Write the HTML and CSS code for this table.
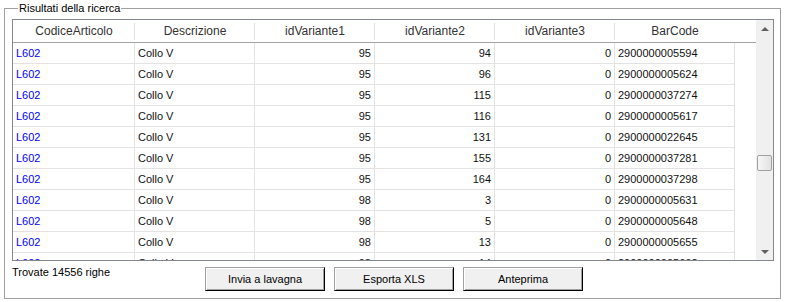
FILE: index.html
```html
<!DOCTYPE html>
<html lang="it">
<head>
    <meta charset="UTF-8">
    <title>Risultati della ricerca</title>
    <link rel="stylesheet" href="styles.css">
</head>
<body>
    <fieldset class="results">
        <legend>Risultati della ricerca</legend>

        <div class="grid">
            <div class="grid-body">
                <table>
                    <thead>
                        <tr>
                            <th class="c1 sep">CodiceArticolo</th>
                            <th class="sep">Descrizione</th>
                            <th class="sep">idVariante1</th>
                            <th class="sep">idVariante2</th>
                            <th class="sep">idVariante3</th>
                            <th>BarCode</th>
                            <th class="fill"></th>
                        </tr>
                    </thead>
                    <tbody>
                        <tr><td class="code">L602</td><td>Collo V</td><td class="num">95</td><td class="num">94</td><td class="num">0</td><td>2900000005594</td><td class="fill"></td></tr>
                        <tr><td class="code">L602</td><td>Collo V</td><td class="num">95</td><td class="num">96</td><td class="num">0</td><td>2900000005624</td><td class="fill"></td></tr>
                        <tr><td class="code">L602</td><td>Collo V</td><td class="num">95</td><td class="num">115</td><td class="num">0</td><td>2900000037274</td><td class="fill"></td></tr>
                        <tr><td class="code">L602</td><td>Collo V</td><td class="num">95</td><td class="num">116</td><td class="num">0</td><td>2900000005617</td><td class="fill"></td></tr>
                        <tr><td class="code">L602</td><td>Collo V</td><td class="num">95</td><td class="num">131</td><td class="num">0</td><td>2900000022645</td><td class="fill"></td></tr>
                        <tr><td class="code">L602</td><td>Collo V</td><td class="num">95</td><td class="num">155</td><td class="num">0</td><td>2900000037281</td><td class="fill"></td></tr>
                        <tr><td class="code">L602</td><td>Collo V</td><td class="num">95</td><td class="num">164</td><td class="num">0</td><td>2900000037298</td><td class="fill"></td></tr>
                        <tr><td class="code">L602</td><td>Collo V</td><td class="num">98</td><td class="num">3</td><td class="num">0</td><td>2900000005631</td><td class="fill"></td></tr>
                        <tr><td class="code">L602</td><td>Collo V</td><td class="num">98</td><td class="num">5</td><td class="num">0</td><td>2900000005648</td><td class="fill"></td></tr>
                        <tr><td class="code">L602</td><td>Collo V</td><td class="num">98</td><td class="num">13</td><td class="num">0</td><td>2900000005655</td><td class="fill"></td></tr>
                        <tr><td class="code">L602</td><td>Collo V</td><td class="num">98</td><td class="num">14</td><td class="num">0</td><td>2900000005662</td><td class="fill"></td></tr>
                    </tbody>
                </table>
            </div>

            <div class="scrollbar">
                <div class="sb-btn"><span class="arrow up"></span></div>
                <div class="sb-track"><div class="sb-thumb"></div></div>
                <div class="sb-btn"><span class="arrow down"></span></div>
            </div>
        </div>

        <div class="footer">
            <span class="count">Trovate 14556 righe</span>
            <button>Invia a lavagna</button>
            <button>Esporta XLS</button>
            <button>Anteprima</button>
        </div>
    </fieldset>
</body>
</html>
```

FILE: styles.css
```css
body {
    margin: 0;
    background-color: #ffffff;
    color: #000000;
    font-family: "Liberation Sans", Arial, sans-serif;
    font-size: 11px;
}

.results {
    margin: 2px 8px 3px 4px;
    padding: 4px 6px 7px 7px;
    border: 1px solid #a0a0a0;
}

.results legend {
    margin-left: 6px;
    padding: 0 1px;
    line-height: 13px;
}

/* data grid */
.grid {
    display: flex;
    height: 240px;
    border: 1px solid #828790;
    overflow: hidden;
}

.grid-body {
    flex: 1;
    overflow: hidden;
}

table {
    width: 743px;
    table-layout: fixed;
    border-collapse: separate;
    border-spacing: 0;
}

th, td {
    box-sizing: border-box;
    width: 120px;
    padding: 0 3px;
    white-space: nowrap;
    overflow: hidden;
}

th {
    position: relative;
    height: 23px;
    font-size: 12px;
    font-weight: normal;
    color: #333333;
    text-align: center;
    border-bottom: 1px solid #a5a5a5;
}

th.sep::after {
    content: "";
    position: absolute;
    top: 3px;
    bottom: 2px;
    right: 0;
    width: 1px;
    background-color: #e0e0e0;
}

th.c1 {
    width: 122px;
}

th.fill {
    width: auto;
}

td {
    height: 21px;
    color: #111111;
    border-right: 1px solid #e3e3e3;
    border-bottom: 1px solid #e3e3e3;
}

td.code {
    color: #0000ff;
}

td.num {
    text-align: right;
}

td.fill {
    border: none;
}

/* vertical scrollbar */
.scrollbar {
    width: 17px;
    display: flex;
    flex-direction: column;
    background-color: #f0f0f0;
}

.sb-btn {
    height: 17px;
    display: flex;
    align-items: center;
    justify-content: center;
}

.arrow {
    width: 0;
    height: 0;
    border-left: 4px solid transparent;
    border-right: 4px solid transparent;
}

.arrow.up {
    border-bottom: 4px solid #606060;
}

.arrow.down {
    border-top: 4px solid #606060;
}

.sb-track {
    flex: 1;
}

.sb-thumb {
    height: 16px;
    margin: 118px 1px 0 1px;
    box-sizing: border-box;
    border: 1px solid #a0a0a0;
    border-radius: 2px;
    background: linear-gradient(to right, #f6f6f6, #e2e2e2);
}

/* bottom bar */
.footer {
    display: flex;
    align-items: center;
    gap: 9px;
    margin-top: 6px;
}

.count {
    align-self: flex-start;
    width: 184px;
    line-height: 11px;
}

button {
    width: 120px;
    height: 24px;
    padding: 0;
    font-family: "Liberation Sans", Arial, sans-serif;
    font-size: 11px;
    color: #000000;
    background-color: #f0f0f0;
    border: 1px solid;
    border-color: #a0a0a0 #000000 #000000 #a0a0a0;
    box-shadow: inset 1px 1px #ffffff, inset -1px -1px #a0a0a0;
}
```
